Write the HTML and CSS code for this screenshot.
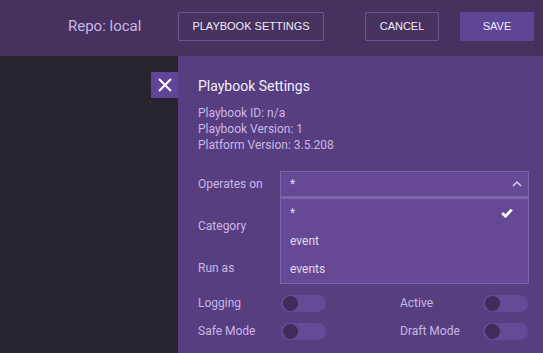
FILE: index.html
```html
<!DOCTYPE html>
<html lang="en">
  <head>
    <meta charset="UTF-8" />
    <title>Playbook Settings</title>
    <link rel="stylesheet" href="styles.css">
  </head>
  <body>
    <header class="topbar">
      <span class="repo">Repo: local</span>
      <button class="btn btn-outline btn-settings">PLAYBOOK SETTINGS</button>
      <button class="btn btn-outline btn-cancel">CANCEL</button>
      <button class="btn btn-fill">SAVE</button>
    </header>

    <main class="workspace">
      <div class="canvas"></div>

      <aside class="panel">
        <button class="close-btn">
          <svg width="16" height="16" viewBox="0 0 16 16">
            <path d="M2 2 L14 14 M14 2 L2 14" stroke="#fff" stroke-width="2" fill="none" />
          </svg>
        </button>

        <h2 class="panel-title">Playbook Settings</h2>
        <div class="info">
          <p>Playbook ID: n/a</p>
          <p>Playbook Version: 1</p>
          <p>Platform Version: 3.5.208</p>
        </div>

        <div class="form">
          <div class="row">
            <label>Operates on</label>
            <div class="select open">
              <span>*</span>
              <svg class="chevron" width="10" height="6" viewBox="0 0 10 6">
                <path d="M1 5 L5 1 L9 5" stroke="#d8ccef" stroke-width="1.5" fill="none" />
              </svg>
              <ul class="menu">
                <li>*
                  <svg width="12" height="10" viewBox="0 0 12 10">
                    <path d="M1.2 5 L4.5 8.2 L10.8 1.6" stroke="#fff" stroke-width="2.8" fill="none" />
                  </svg>
                </li>
                <li>event</li>
                <li>events</li>
              </ul>
            </div>
          </div>
          <div class="row">
            <label>Category</label>
          </div>
          <div class="row">
            <label>Run as</label>
          </div>
        </div>

        <div class="toggles">
          <div class="toggle-row"><label>Logging</label><span class="switch"></span></div>
          <div class="toggle-row"><label>Active</label><span class="switch"></span></div>
          <div class="toggle-row"><label>Safe Mode</label><span class="switch"></span></div>
          <div class="toggle-row"><label>Draft Mode</label><span class="switch"></span></div>
        </div>
      </aside>
    </main>
  </body>
</html>
```

FILE: styles.css
```css
:root {
  --header-color: #46315f;
  --canvas-color: #27242f;
  --panel-color: #573e81;
  --field-color: #654995;
  --border-color: #7b64a8;
  --accent-color: #5f4597;
  --text-color: #c8b7e6;
}

* {
  margin: 0;
  padding: 0;
  box-sizing: border-box;
}

body {
  height: 100vh;
  overflow: hidden;
  display: flex;
  flex-direction: column;
  font-family: 'Roboto', sans-serif;
  color: var(--text-color);
}

.topbar {
  height: 56px;
  flex-shrink: 0;
  display: flex;
  align-items: center;
  padding: 0 9px 0 68px;
  background-color: var(--header-color);
}

.repo {
  font-size: 15px;
  width: 110px;
  margin-top: -4px;
}

.btn {
  height: 29px;
  margin-top: -4px;
  font-family: 'Liberation Sans', sans-serif;
  font-size: 11px;
  color: #f1ebfb;
  background: none;
  border: 1px solid #6a5590;
  border-radius: 1px;
}

.btn-settings {
  width: 146px;
}

.btn-cancel {
  width: 74px;
  margin-left: 41px;
}

.btn-fill {
  width: 74px;
  margin-left: 21px;
  border-color: var(--accent-color);
  background-color: var(--accent-color);
}

.workspace {
  flex: 1;
  display: flex;
}

.canvas {
  width: 178px;
  background-color: var(--canvas-color);
  background-image: radial-gradient(circle, #2e2b37 1px, transparent 1.5px);
  background-size: 20px 20px;
  background-position: 0 -4px;
}

.panel {
  position: relative;
  flex: 1;
  padding: 20px 14px 0 20px;
  background-color: var(--panel-color);
}

.close-btn {
  position: absolute;
  left: -27px;
  top: 16px;
  width: 27px;
  height: 26px;
  display: flex;
  align-items: center;
  justify-content: center;
  border: none;
  background-color: var(--accent-color);
}

.panel-title {
  font-size: 14px;
  font-weight: 400;
  line-height: 20px;
  color: #f2ecfb;
}

.info {
  margin-top: 9px;
  font-size: 12px;
  line-height: 16px;
}

.form {
  margin-top: 18px;
  display: flex;
  flex-direction: column;
  gap: 16px;
}

.row {
  display: flex;
  align-items: center;
  height: 26px;
  font-size: 12px;
}

.row label {
  width: 82px;
}

.select {
  position: relative;
  flex: 1;
  height: 26px;
  display: flex;
  align-items: center;
  justify-content: space-between;
  padding: 0 6px 0 9px;
  background-color: var(--field-color);
  border: 1px solid var(--border-color);
  color: #e6dcf5;
}

.menu {
  position: absolute;
  left: -1px;
  right: -1px;
  top: 25px;
  list-style: none;
  background-color: var(--field-color);
  border: 1px solid var(--border-color);
  border-top: 2px solid var(--border-color);
}

.menu li {
  height: 28px;
  display: flex;
  align-items: center;
  justify-content: space-between;
  padding: 0 15px 0 9px;
  font-size: 12px;
  color: #e3d9f3;
}

.toggles {
  margin-top: 13px;
  display: grid;
  grid-template-columns: 202px 1fr;
  row-gap: 10px;
}

.toggle-row {
  display: flex;
  align-items: center;
  height: 18px;
  font-size: 12px;
}

.toggle-row label {
  width: 83px;
}

.switch {
  position: relative;
  width: 45px;
  height: 17px;
  border-radius: 9px;
  background-color: #654a96;
}

.switch::before {
  content: '';
  position: absolute;
  left: 2px;
  top: 1px;
  width: 15px;
  height: 15px;
  border-radius: 50%;
  background-color: #3f2c5b;
}
```
